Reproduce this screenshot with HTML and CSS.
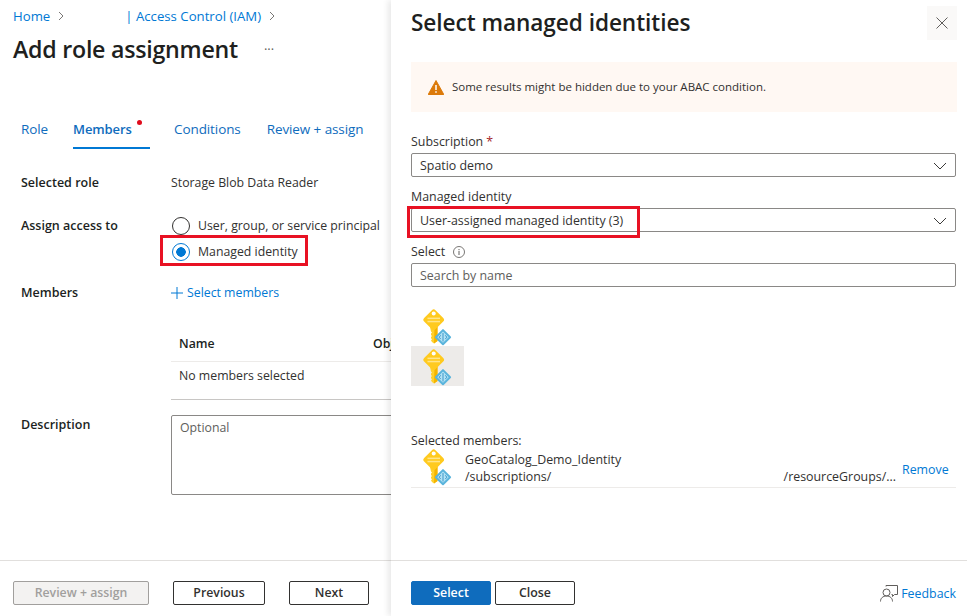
FILE: index.html
```html
<!DOCTYPE html>
<html lang="en">
<head>
<meta charset="utf-8">
<title>Add role assignment</title>
<link rel="stylesheet" href="styles.css">
</head>
<body>
<svg class="defs" width="0" height="0" aria-hidden="true">
  <symbol id="key" viewBox="0 0 30 37">
    <path d="M8 18h7.500v14l-3.500 2.500-2-1.500-1-1.500 1-1.200-1-1.100 0-1.300 1-1-1-1 0-1.300 1-1-1-1z" fill="#ffd02b"/>
    <path d="M12.500 18h3v14l-3.500 2.500z" fill="#f4b400"/>
    <rect x="3.700" y="2.800" width="16" height="16" rx="2.500" transform="rotate(45 11.700 10.800)" fill="#ffca1f"/>
    <circle cx="11.700" cy="4.500" r="2" fill="#fff"/>
    <rect x="5.500" y="8.600" width="12.500" height="1.500" fill="#ffe58a"/>
    <rect x="5.500" y="11.800" width="12.500" height="1.500" fill="#ffe58a"/>
    <rect x="15" y="22.200" width="12" height="12" rx="1" transform="rotate(45 21 28.200)" fill="#5ab4dc"/>
    <rect x="17" y="24.200" width="8" height="8" transform="rotate(45 21 28.200)" fill="#b4e3f5"/>
    <path d="M21 24v8.500M18.700 26.300l-1.500 1.900 1.500 1.900M23.300 26.300l1.500 1.900-1.500 1.900" fill="none" stroke="#2f8fc4" stroke-width=".9"/>
  </symbol>
  <symbol id="chev" viewBox="0 0 14 8"><path d="M1 1l6 6 6-6" fill="none" stroke="#3b3a39" stroke-width="1"/></symbol>
</svg>

<div class="page">
  <main class="blade">
    <div class="blade-body">
      <nav class="crumbs">
        <a class="link crumb-home">Home</a>
        <svg class="crumb-chev" viewBox="0 0 6 10"><path d="M1 1l4 4-4 4" fill="none" stroke="#797775"/></svg>
        <a class="link crumb-iam">| Access Control (IAM)</a>
        <svg class="crumb-chev" viewBox="0 0 6 10"><path d="M1 1l4 4-4 4" fill="none" stroke="#797775"/></svg>
      </nav>
      <header class="blade-head">
        <h1>Add role assignment</h1>
        <span class="more">···</span>
      </header>

      <div class="tabs">
        <a class="tab tab-role">Role</a>
        <a class="tab tab-members">Members<span class="dot"></span></a>
        <a class="tab tab-cond">Conditions</a>
        <a class="tab tab-review">Review + assign</a>
      </div>

      <div class="form">
        <div class="row row-role">
          <div class="label">Selected role</div>
          <div class="value">Storage Blob Data Reader</div>
        </div>
        <div class="row row-access">
          <div class="label">Assign access to</div>
          <div class="radios">
            <div class="radio"><span class="ring"></span>User, group, or service principal</div>
            <div class="radio radio-on"><span class="ring"></span>Managed identity<span class="mark mark-radio"></span></div>
          </div>
        </div>
        <div class="row row-members">
          <div class="label">Members</div>
          <a class="link add">
            <svg class="plus" viewBox="0 0 12 12"><path d="M6 0v12M0 6h12" stroke="#0078d4" fill="none"/></svg>Select members
          </a>
        </div>
        <div class="row row-table">
          <div></div>
          <div class="table">
            <div class="thead"><span class="th-name">Name</span><span>Object ID</span></div>
            <div class="tbody">No members selected</div>
          </div>
        </div>
        <div class="row row-desc">
          <div class="label label-desc">Description</div>
          <div class="textarea">Optional</div>
        </div>
      </div>
    </div>
    <footer class="blade-foot">
      <button class="btn btn-disabled">Review + assign</button>
      <button class="btn btn-prev">Previous</button>
      <button class="btn btn-next">Next</button>
    </footer>
  </main>

  <aside class="panel">
    <div class="panel-body">
      <header class="panel-head">
        <h2>Select managed identities</h2>
        <button class="close" aria-label="Close">
          <svg viewBox="0 0 12 12"><path d="M.5.500l11 11M11.500.500l-11 11" stroke="#605e5c" fill="none"/></svg>
        </button>
      </header>
      <div class="banner">
        <svg class="warn" viewBox="0 0 16 15"><path d="M8 0.500L15.800 14.500H.2z" fill="#dc7a0a" stroke="#dc7a0a" stroke-linejoin="round"/><path d="M8 5v5M8 11.200v1.500" stroke="#fff" stroke-width="1.500"/></svg>
        Some results might be hidden due to your ABAC condition.
      </div>

      <label class="f-label f-sub">Subscription <span class="req">*</span></label>
      <div class="select">Spatio demo<svg class="sel-chev"><use href="#chev"/></svg></div>

      <label class="f-label f-mi">Managed identity</label>
      <div class="select">User-assigned managed identity (3)<svg class="sel-chev"><use href="#chev"/></svg><span class="mark mark-select"></span></div>

      <label class="f-label f-sel">Select
        <svg class="info" viewBox="0 0 12 12"><circle cx="6" cy="6" r="5.500" fill="none" stroke="#797775"/><path d="M6 5v4M6 3v1.200" stroke="#605e5c"/></svg>
      </label>
      <div class="select placeholder">Search by name</div>

      <div class="results">
        <div class="res"><svg class="key"><use href="#key"/></svg></div>
        <div class="res res-hover"><svg class="key"><use href="#key"/></svg></div>
      </div>

      <div class="sel-title">Selected members:</div>
      <div class="sel-item">
        <svg class="key"><use href="#key"/></svg>
        <div class="sel-text">
          <div>GeoCatalog_Demo_Identity</div>
          <div class="sel-path"><span>/subscriptions/</span><span>/resourceGroups/...</span></div>
        </div>
        <a class="link remove">Remove</a>
      </div>
    </div>
    <footer class="panel-foot">
      <button class="btn btn-primary">Select</button>
      <button class="btn btn-close">Close</button>
      <a class="link feedback">
        <svg class="fb" viewBox="0 0 18 17"><circle cx="6.500" cy="7.500" r="3.500" fill="none" stroke="#605e5c"/><path d="M.5 16.500c0-3.500 2.500-5.500 6-5.500s6 2 6 5.500M6 1.500V.5h11.500v9h-3l-2 2v-2h-1" fill="none" stroke="#605e5c"/></svg>
        Feedback
      </a>
    </footer>
  </aside>
</div>
</body>
</html>
```
FILE: styles.css
```css
* { box-sizing: border-box; }
html, body { margin: 0; height: 100%; }
body {
  font-family: "Open Sans", "Noto Sans", "Liberation Sans", sans-serif;
  font-size: 12.300px;
  line-height: 16px;
  color: #323130;
  background: #fff;
  overflow: hidden;
}
.defs { position: absolute; }
.page { display: flex; width: 967px; height: 616px; }
.link { color: #0078d4; }

/* left blade */
.blade { width: 391px; flex: none; display: flex; flex-direction: column; overflow: hidden; }
.blade-body { flex: 1; padding-top: 8px; min-height: 0; }
.crumbs { display: flex; align-items: center; height: 16px; padding-left: 13px; font-size: 13.200px; }
.crumb-chev { width: 6px; height: 10px; margin-left: 8px; }
.crumb-iam { margin-left: 61px; }
.blade-head { display: flex; align-items: center; height: 36px; margin-top: 7px; padding-left: 13px; }
h1 { margin: 0; font-size: 23.200px; line-height: 36px; font-weight: 600; color: #201f1e; letter-spacing: -.25px; }
.more { margin-left: 26px; font-size: 13px; color: #605e5c; }

.tabs { display: flex; height: 32px; margin-top: 50px; padding-left: 21px; }
.tab { position: relative; color: #0f6cbd; line-height: 24px; height: 32px; font-size: 13.500px; letter-spacing: -.1px; }
.tab-members { width: 77px; margin-left: 25px; font-size: 13px; font-weight: 600; border-bottom: 2px solid #0078d4; }
.tab-cond { margin-left: 24px; }
.tab-review { margin-left: 26px; }
.dot { position: absolute; left: 64px; top: 3px; width: 5px; height: 5px; border-radius: 50%; background: #e00b1c; }

.form { padding-left: 21px; }
.row { display: grid; grid-template-columns: 150px 1fr; width: 500px; }
.label { font-size: 12.500px; font-weight: 600; color: #201f1e; }
.label-desc { padding-top: 2px; }
.row-role { margin-top: 26px; }
.row-access { margin-top: 27px; }
.row-members { margin-top: 23px; }
.row-table { margin-top: 35px; }
.row-desc { margin-top: 15px; }
.radios { display: flex; flex-direction: column; gap: 6px; margin-top: -2px; }
.radio { position: relative; display: flex; align-items: center; height: 20px; }
.ring { width: 18px; height: 18px; margin: 0 8px 0 1px; border: 1px solid #323130; border-radius: 50%; background: #fff; }
.radio-on .ring { border-color: #0078d4; background: radial-gradient(circle, #0078d4 0 4.500px, #fff 5px); }
.mark { position: absolute; border: 3px solid #e81123; pointer-events: none; }
.mark-radio { left: -11px; top: -7px; width: 148px; height: 31px; }
.add { display: flex; align-items: center; }
.plus { width: 12px; height: 12px; margin-right: 4px; }
.table { width: 340px; }
.thead { display: flex; height: 26px; padding: 0 8px; font-weight: 600; color: #201f1e; border-bottom: 1px solid #edebe9; }
.th-name { width: 194px; }
.tbody { height: 38px; padding: 6px 8px; border-bottom: 1px solid #c8c6c4; }
.textarea { width: 340px; height: 80px; padding: 4px 8px; border: 1px solid #8a8886; border-radius: 2px; color: #605e5c; }
.blade-foot { display: flex; align-items: center; flex: none; height: 56px; padding: 8px 0 0 13px; border-top: 1px solid #e1dfdd; }

/* buttons */
.btn { height: 24px; padding: 0; font: inherit; font-weight: 600; border: 1px solid #323130; border-radius: 2px; background: #fff; color: #323130; }
.btn-disabled { width: 136px; background: #f3f2f1; border-color: #a19f9d; color: #a19f9d; }
.btn-prev { width: 92px; margin-left: 24px; }
.btn-next { width: 80px; margin-left: 24px; }
.btn-primary { width: 80px; background: #0f6cbd; border-color: #0f6cbd; color: #fff; }
.btn-close { width: 80px; margin-left: 4px; }

/* right panel */
.panel { position: relative; z-index: 1; flex: 1; min-width: 0; display: flex; flex-direction: column; background: #fff; box-shadow: -3px 0 6px rgba(0, 0, 0, .09); font-size: 12.400px; }
.panel-body { flex: 1; padding: 6px 11px 0 20px; min-height: 0; }
.panel-head { display: flex; justify-content: space-between; height: 34px; }
h2 { margin: 0; font-size: 22.600px; line-height: 34px; font-weight: 600; color: #201f1e; letter-spacing: -.05px; }
.close { width: 30px; height: 34px; margin-right: -1px; padding: 0; border: 0; background: #faf9f8; display: flex; align-items: center; justify-content: center; }
.close svg { width: 12px; height: 12px; }
.banner { display: flex; align-items: center; height: 50px; margin: 22px -1px 0 0; padding-left: 17px; background: #fff8f3; font-size: 11.500px; }
.warn { width: 16px; height: 15px; margin-right: 8px; }
.f-label { display: flex; align-items: center; height: 16px; }
.f-sub { margin-top: 22px; }
.f-mi { margin-top: 12px; }
.f-sel { margin-top: 12px; }
.req { color: #a4262c; margin-left: 3px; }
.select { position: relative; display: flex; align-items: center; height: 24px; margin-top: 3px; padding: 1px 8px 0; border: 1px solid #8a8886; border-radius: 2px; }
.placeholder { color: #605e5c; }
.sel-chev { position: absolute; right: 8px; top: 8px; width: 14px; height: 8px; }
.mark-select { left: -5px; top: -3px; width: 233px; height: 32px; }
.info { width: 12px; height: 12px; margin-left: 8px; }
.results { width: 53px; margin-top: 19px; }
.res { height: 40px; padding: 3px 0 0 11px; }
.res-hover { background: #edebe9; }
.key { display: block; width: 30px; height: 37px; }
.sel-title { margin-top: 47px; }
.sel-item { position: relative; display: flex; height: 39px; padding-left: 11px; border-bottom: 1px solid #edebe9; }
.sel-text { width: 431px; margin-left: 13px; padding-top: 2px; line-height: 17px; }
.sel-path { display: flex; justify-content: space-between; }
.remove { margin-left: 6px; margin-top: 13px; }
.panel-foot { display: flex; align-items: center; flex: none; height: 56px; padding: 8px 11px 0 20px; border-top: 1px solid #e1dfdd; }
.feedback { display: flex; align-items: center; margin-left: auto; margin-top: 2px; }
.fb { width: 18px; height: 17px; margin-right: 3px; }
```
